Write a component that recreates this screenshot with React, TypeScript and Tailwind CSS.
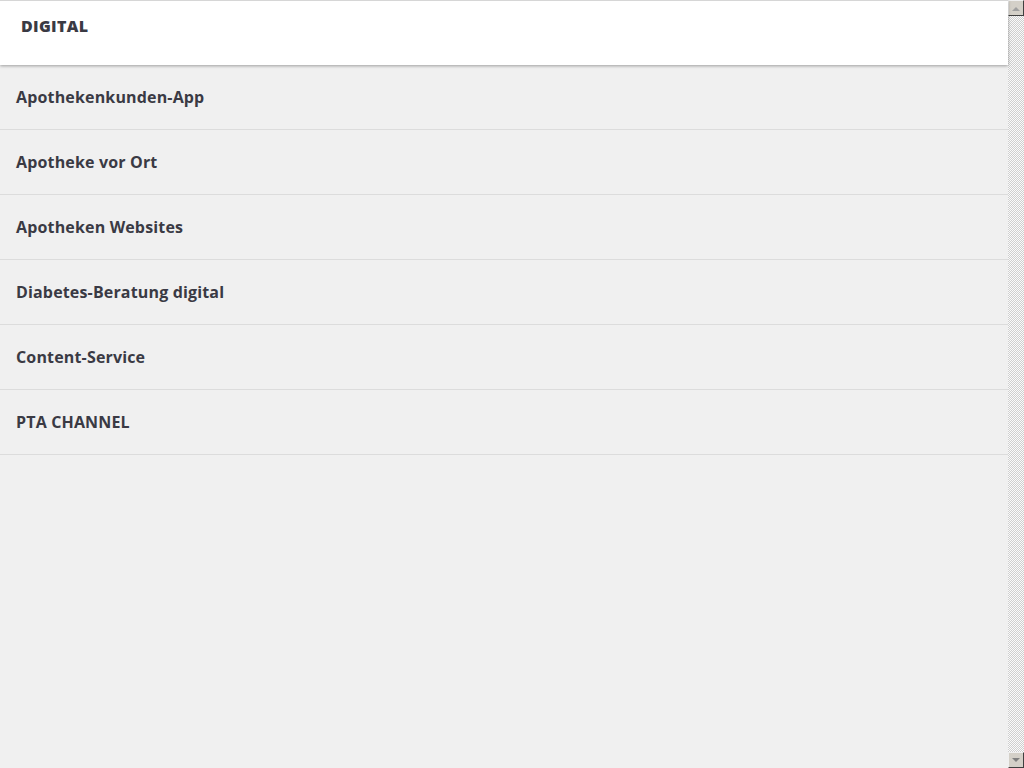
import React from "react"

const links = [
  "Apothekenkunden-App",
  "Apotheke vor Ort",
  "Apotheken Websites",
  "Diabetes-Beratung digital",
  "Content-Service",
  "PTA CHANNEL",
]

function ScrollButton({ dir }: { dir: "up" | "down" }) {
  return (
    <div className="flex h-4 w-4 items-center justify-center border border-t-[#f0f0f0] border-l-[#f0f0f0] border-r-[#404040] border-b-[#404040] bg-[#d4d0c8]">
      <svg width="8" height="5" viewBox="0 0 8 5">
        {dir === "up" ? <path d="M0 5 L4 1 L8 5 Z" fill="#a0a0a0" /> : <path d="M0 0 L4 4 L8 0 Z" fill="#808080" />}
      </svg>
    </div>
  )
}

export default function App() {
  return (
    <div className="flex h-[768px] w-[1024px] overflow-hidden bg-[#f0f0f0] font-['Open_Sans',sans-serif]">
      <main className="flex-1">
        {/* Section header */}
        <div className="relative z-10 h-[65px] border-t border-[#d6d6d6] bg-white shadow-[0_1px_3px_rgba(0,0,0,0.35)]">
          <h2 className="px-[21px] pt-[14px] text-[16px] font-extrabold uppercase leading-[22px] tracking-[0.02em] text-[#3a3a44]">
            Digital
          </h2>
        </div>

        <ul>
          {links.map((label) => (
            <li key={label} className="flex h-[65px] items-center border-b border-[#dcdcdc] px-4">
              <a href="#" className="text-[16px] font-bold tracking-[0.01em] text-[#3a3a44]">
                {label}
              </a>
            </li>
          ))}
        </ul>
      </main>

      {/* Classic scrollbar */}
      <div className="flex w-4 flex-col justify-between bg-[repeating-conic-gradient(#cfcfcf_0%_25%,#fafafa_0%_50%)] bg-[length:2px_2px]">
        <ScrollButton dir="up" />
        <ScrollButton dir="down" />
      </div>
    </div>
  )
}
